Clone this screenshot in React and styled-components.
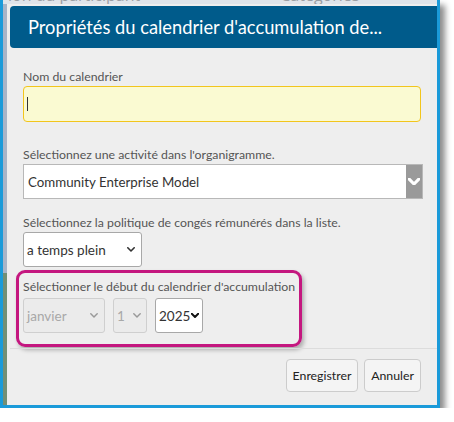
import React from "react";
import styled, { createGlobalStyle } from "styled-components";

const Global = createGlobalStyle`
  html, body { margin: 0; padding: 0; background: #ffffff; }
  body { font-family: "Lato", "Open Sans", sans-serif; }
`;

const Frame = styled.div`
  box-sizing: border-box;
  width: 440px;
  height: 408px;
  border: 3px solid #1a9ad9;
  border-top: 0;
  box-shadow: 5px 5px 6px rgba(0, 0, 0, 0.45);
  display: flex;
  flex-direction: column;
  overflow: hidden;
  background: #dfe4ea;
`;

const TopStrip = styled.div`
  height: 4px;
  overflow: hidden;
  display: flex;
  background: #dfe4ea;
  flex-shrink: 0;
`;

const BgText = styled.span`
  font-family: "Open Sans", sans-serif;
  font-size: 16px;
  line-height: 18px;
  color: #9a9ea4;
  margin-top: -14px;
  margin-left: ${(p) => p.$left}px;
  white-space: nowrap;
`;

const Row = styled.div`
  flex: 1;
  display: flex;
  min-height: 0;
`;

const LeftStrip = styled.div`
  width: 4px;
  flex-shrink: 0;
  background: linear-gradient(to bottom, #a8b4c7 0 269px, #728f75 269px);
`;

const Dialog = styled.div`
  flex: 1;
  display: flex;
  flex-direction: column;
  background: #eeeeee;
  padding-top: 2px;
  min-width: 0;
`;

const Header = styled.div`
  height: 42px;
  margin-left: 3px;
  background: #005b8b;
  border-radius: 4px 0 0 4px;
  display: flex;
  align-items: center;
  padding-left: 18px;
  color: #ffffff;
  font-family: "Lato", sans-serif;
  font-size: 18.3px;
  white-space: nowrap;
  overflow: hidden;
`;

const Body = styled.div`
  padding: 20px 16px 0 16px;
  flex: 1;
  display: flex;
  flex-direction: column;
  align-items: flex-start;
`;

const Label = styled.div`
  font-family: "Lato", sans-serif;
  font-size: 12.3px;
  line-height: 18px;
  color: #555555;
  margin-top: ${(p) => p.$mt || 0}px;
  margin-bottom: ${(p) => p.$mb || 0}px;
  white-space: nowrap;
`;

const NameInput = styled.div`
  box-sizing: border-box;
  width: 398px;
  height: 36px;
  background: #fafad2;
  border: 1px solid #f2c51c;
  border-radius: 4px;
  display: flex;
  align-items: center;
  padding-left: 3px;
`;

const Caret = styled.span`
  width: 1px;
  height: 14px;
  background: #333333;
`;

const WideSelect = styled.div`
  box-sizing: border-box;
  width: 400px;
  height: 35px;
  background: #ffffff;
  border: 1px solid #b8b8b8;
  display: flex;
  align-items: stretch;
`;

const SelectText = styled.span`
  flex: 1;
  display: flex;
  align-items: center;
  padding-left: ${(p) => p.$pl ?? 3}px;
  font-family: "Lato", sans-serif;
  font-size: ${(p) => p.$fs || 13.5}px;
  color: ${(p) => (p.$disabled ? "#a8a8a8" : "#333333")};
  white-space: nowrap;
`;

const ArrowBlock = styled.span`
  width: 16px;
  background: #9a9a9a;
  display: flex;
  align-items: center;
  justify-content: center;
`;

const SmallSelect = styled.div`
  box-sizing: border-box;
  width: ${(p) => p.$w}px;
  height: 35px;
  background: ${(p) => (p.$disabled ? "#ebebeb" : "#ffffff")};
  border: 1px solid ${(p) => (p.$disabled ? "#cfcfcf" : "#a8a8a8")};
  border-radius: 3px;
  display: flex;
  align-items: center;
  padding-right: ${(p) => p.$pr}px;
`;

const Highlight = styled.div`
  box-sizing: border-box;
  margin-top: 3px;
  margin-left: -7px;
  width: 286px;
  height: 77px;
  border: 3px solid #c4177f;
  border-radius: 9px;
  box-shadow: 2px 3px 4px rgba(0, 0, 0, 0.28);
  padding: 5px 0 0 4px;
`;

const DateRow = styled.div`
  display: flex;
  gap: 8px;
  margin-top: 2px;
`;

const Footer = styled.div`
  border-top: 1px solid #dcdcdc;
  margin-left: 3px;
  padding: 10px 16px 13px 0;
  display: flex;
  justify-content: flex-end;
  gap: 6px;
`;

const Button = styled.button`
  box-sizing: border-box;
  height: 33px;
  width: ${(p) => p.$w}px;
  background: #f4f4f4;
  border: 1px solid #cccccc;
  border-radius: 4px;
  font-family: "Lato", sans-serif;
  font-size: 12.3px;
  color: #222222;
  padding: 0;
  cursor: pointer;
`;

const Chevron = ({ color = "#333", w = 8, sw = 2 }) => (
  <svg width={w} height={w * 0.6} viewBox="0 0 10 6" style={{ display: "block", flexShrink: 0 }}>
    <polyline points="1,1 5,5 9,1" fill="none" stroke={color} strokeWidth={sw} strokeLinecap="round" strokeLinejoin="round" />
  </svg>
);

export default function App() {
  return (
    <>
      <Global />
      <Frame>
        <TopStrip>
          <BgText $left={5}>ion du participant</BgText>
          <BgText $left={140}>Catégories</BgText>
        </TopStrip>
        <Row>
          <LeftStrip />
          <Dialog>
            <Header>Propriétés du calendrier d'accumulation de...</Header>
            <Body>
              <Label>Nom du calendrier</Label>
              <NameInput>
                <Caret />
              </NameInput>

              <Label $mt={24}>Sélectionnez une activité dans l'organigramme.</Label>
              <WideSelect>
                <SelectText $pl={4} $fs={13.3}>Community Enterprise Model</SelectText>
                <ArrowBlock>
                  <Chevron color="#ffffff" w={12} sw={2.6} />
                </ArrowBlock>
              </WideSelect>

              <Label $mt={15}>Sélectionnez la politique de congés rémunérés dans la liste.</Label>
              <SmallSelect $w={119} $pr={6}>
                <SelectText>a temps plein</SelectText>
                <Chevron color="#333333" w={8} sw={2} />
              </SmallSelect>

              <Highlight>
                <Label>Sélectionner le début du calendrier d'accumulation</Label>
                <DateRow>
                  <SmallSelect $w={82} $pr={6} $disabled>
                    <SelectText $disabled>janvier</SelectText>
                    <Chevron color="#999999" w={8} sw={1.8} />
                  </SmallSelect>
                  <SmallSelect $w={34} $pr={5} $disabled>
                    <SelectText $disabled>1</SelectText>
                    <Chevron color="#999999" w={8} sw={1.8} />
                  </SmallSelect>
                  <SmallSelect $w={48} $pr={3}>
                    <SelectText>2025</SelectText>
                    <Chevron color="#111111" w={8} sw={2.4} />
                  </SmallSelect>
                </DateRow>
              </Highlight>
            </Body>
            <Footer>
              <Button $w={72}>Enregistrer</Button>
              <Button $w={57}>Annuler</Button>
            </Footer>
          </Dialog>
        </Row>
      </Frame>
    </>
  );
}
